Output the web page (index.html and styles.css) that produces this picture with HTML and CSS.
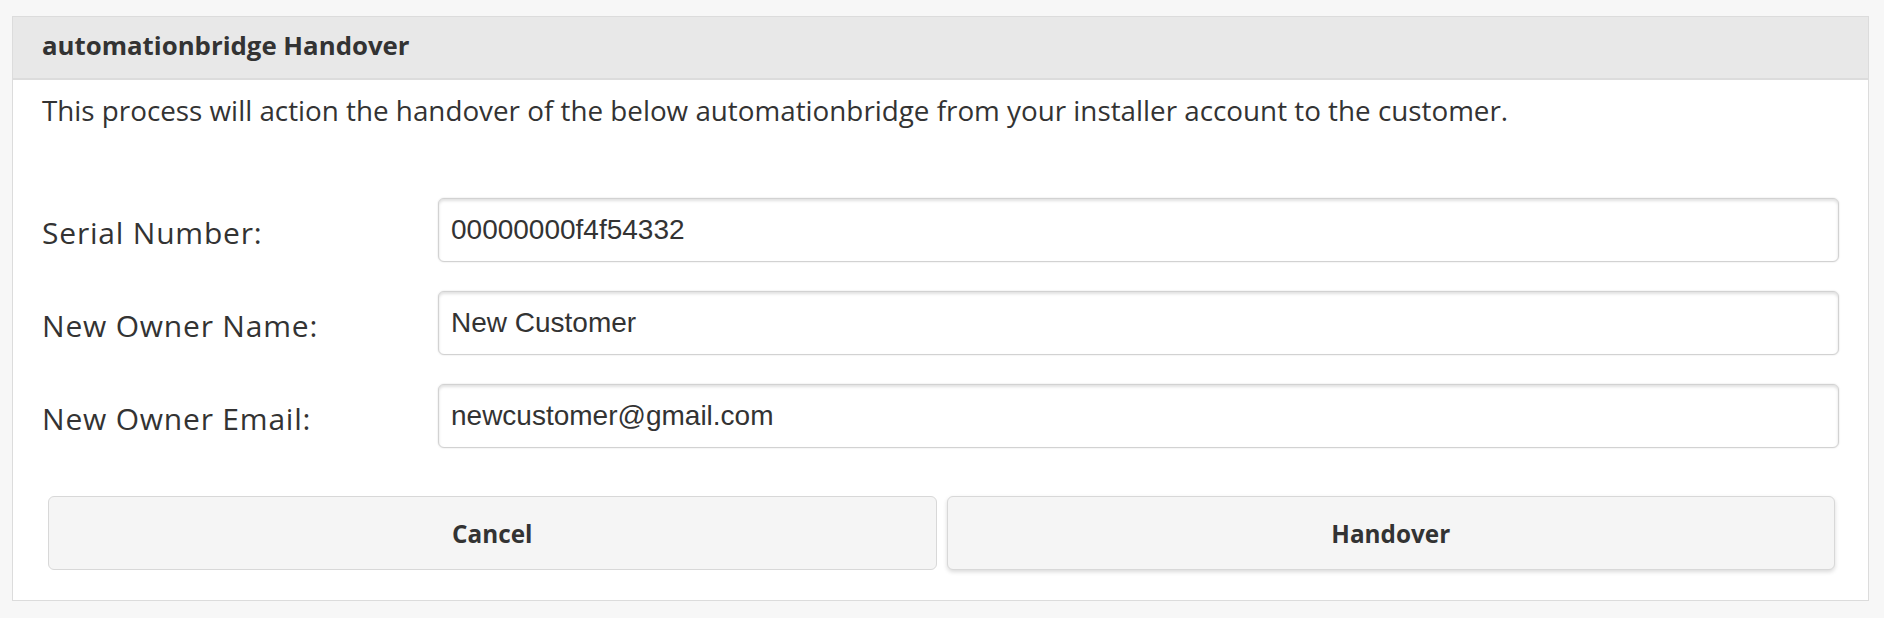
FILE: index.html
```html
<!DOCTYPE html>
<html>
<head>
<meta charset="utf-8">
<link rel="stylesheet" href="styles.css">
</head>
<body>
<div class="page">
  <div class="panel">
    <div class="panel-heading">automationbridge Handover</div>
    <div class="panel-body">
      <p class="intro">This process will action the handover of the below automationbridge from your installer account to the customer.</p>
      <form class="form">
        <div class="row">
          <label class="label">Serial Number:</label>
          <input class="input" type="text" value="00000000f4f54332">
        </div>
        <div class="row">
          <label class="label">New Owner Name:</label>
          <input class="input" type="text" value="New Customer">
        </div>
        <div class="row">
          <label class="label">New Owner Email:</label>
          <input class="input" type="text" value="newcustomer@gmail.com">
        </div>
        <div class="actions">
          <button class="btn" type="button">Cancel</button>
          <button class="btn btn-raised" type="button">Handover</button>
        </div>
      </form>
    </div>
  </div>
</div>
</body>
</html>
```
FILE: styles.css
```css
* { box-sizing: border-box; }
html, body {
  margin: 0;
  background: #f7f7f7;
  font-family: "Open Sans", Lato, sans-serif;
  color: #333;
}
.page {
  padding: 16px 15px 16px 12px;
}
.panel {
  background: #fff;
  border: 1px solid #dcdcdc;
}
.panel-heading {
  background: #e8e8e8;
  border-bottom: 2px solid #dcdcdc;
  height: 63px;
  padding: 0 29px 5px 29px;
  display: flex;
  align-items: center;
  font-weight: 700;
  font-size: 25.8px;
}
.panel-body {
  padding: 0 29px 30px 29px;
}
.intro {
  margin: 0;
  padding-top: 14px;
  font-size: 27.8px;
  line-height: 32px;
  height: 118px;
}
.row {
  display: flex;
  align-items: center;
  margin-bottom: 30px;
  height: 63px;
}
.label {
  width: 396px;
  flex: none;
  font-size: 30px;
  letter-spacing: 0.8px;
  padding-top: 6px;
}
.input {
  flex: 1;
  height: 64px;
  margin-right: 0;
  border: 1px solid #d2d2d2;
  border-radius: 6px;
  box-shadow: inset 0 2px 3px rgba(0,0,0,0.12), 0 0 2px rgba(0,0,0,0.14);
  padding: 0 12px;
  font-family: "Liberation Sans", Arial, sans-serif;
  font-size: 28px;
  color: #333;
  background: #fff;
}
.actions {
  display: flex;
  gap: 10px;
  margin: 49px 4px 0 6px;
}
.btn {
  flex: 1;
  height: 74px;
  background: #f5f5f5;
  border: 1px solid #d8d8d8;
  border-radius: 6px;
  font-family: "Open Sans", Lato, sans-serif;
  font-weight: 700;
  font-size: 24.3px;
  color: #333;
}
.btn-raised {
  box-shadow: 0 2px 4px rgba(0,0,0,0.15);
}
```
